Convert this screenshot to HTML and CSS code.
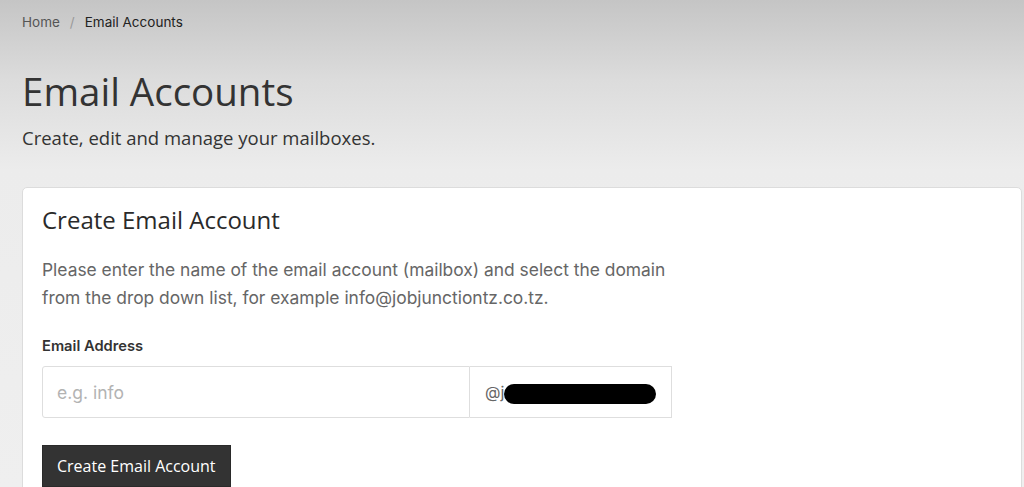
FILE: index.html
```html
<!DOCTYPE html>
<html>
<head>
<meta charset="utf-8">
<link rel="stylesheet" href="styles.css">
</head>
<body>
<div class="page">
  <nav class="crumbs">
    <span class="crumb-link">Home</span>
    <span class="crumb-sep">/</span>
    <span class="crumb-current">Email Accounts</span>
  </nav>
  <header class="head">
    <h1 class="title">Email Accounts</h1>
    <p class="subtitle">Create, edit and manage your mailboxes.</p>
  </header>
  <section class="card">
    <h2 class="card-title">Create Email Account</h2>
    <p class="card-text">Please enter the name of the email account (mailbox) and select the domain<br>from the drop down list, for example info@jobjunctiontz.co.tz.</p>
    <label class="field-label">Email Address</label>
    <div class="input-group">
      <input class="input" type="text" placeholder="e.g. info">
      <div class="addon"><span class="addon-text">@j</span><span class="redact"></span></div>
    </div>
    <button class="btn">Create Email Account</button>
  </section>
</div>
</body>
</html>
```

FILE: styles.css
```css
html, body {
  margin: 0;
  padding: 0;
  height: 100%;
}
body {
  background: linear-gradient(to bottom, #c5c5c5 0px, #dcdcdc 80px, #ececec 170px, #efefef 100%);
  font-family: "Open Sans", sans-serif;
  overflow: hidden;
}
.page {
  padding: 12px 2px 0 22px;
}
.crumbs {
  font-family: "Inter", sans-serif;
  font-size: 13.5px;
  line-height: 20px;
  display: flex;
  gap: 10px;
}
.crumb-link { color: #555; }
.crumb-sep { color: #999; }
.crumb-current { color: #222; }
.head {
  margin-top: 37px;
}
.title {
  margin: 0;
  font-size: 38.5px;
  font-weight: 400;
  line-height: 44px;
  color: #333;
}
.subtitle {
  margin: 12px 0 0;
  font-size: 18.5px;
  line-height: 26px;
  color: #333;
}
.card {
  margin-top: 36px;
  background: #fff;
  border: 1px solid #dcdcdc;
  border-radius: 5px;
  padding: 16px 19px 0;
  height: 320px;
}
.card-title {
  margin: 0;
  font-size: 24px;
  font-weight: 500;
  line-height: 32px;
  color: #2a2a2a;
}
.card-text {
  margin: 20px 0 0;
  font-family: "Inter", sans-serif;
  font-size: 17.4px;
  line-height: 28px;
  color: #666;
}
.field-label {
  display: block;
  margin-top: 24px;
  font-family: "Inter", sans-serif;
  font-size: 14.7px;
  font-weight: 600;
  line-height: 20px;
  color: #333;
}
.input-group {
  display: flex;
  margin-top: 10px;
  width: 630px;
  height: 52px;
}
.input {
  flex: 0 0 428px;
  box-sizing: border-box;
  height: 52px;
  border: 1px solid #dedede;
  border-radius: 3px 0 0 3px;
  padding: 0 14px;
  font-family: "Inter", sans-serif;
  font-size: 17.5px;
  color: #333;
  outline: none;
}
.input::placeholder { color: #b3b3b3; }
.addon {
  flex: 1;
  box-sizing: border-box;
  border: 1px solid #dedede;
  border-left: none;
  display: flex;
  align-items: center;
  padding-left: 15px;
  font-family: "Inter", sans-serif;
  font-size: 16px;
  color: #666;
}
.redact {
  display: block;
  width: 152px;
  height: 20px;
  background: #000;
  border-radius: 10px;
  margin-left: 0;
  margin-top: 3px;
}
.btn {
  margin-top: 27px;
  background: #333;
  color: #fff;
  border: 1px solid #2a2a2a;
  font-family: "Open Sans", sans-serif;
  font-size: 16px;
  padding: 0 14px;
  height: 42px;
  cursor: pointer;
}
```
